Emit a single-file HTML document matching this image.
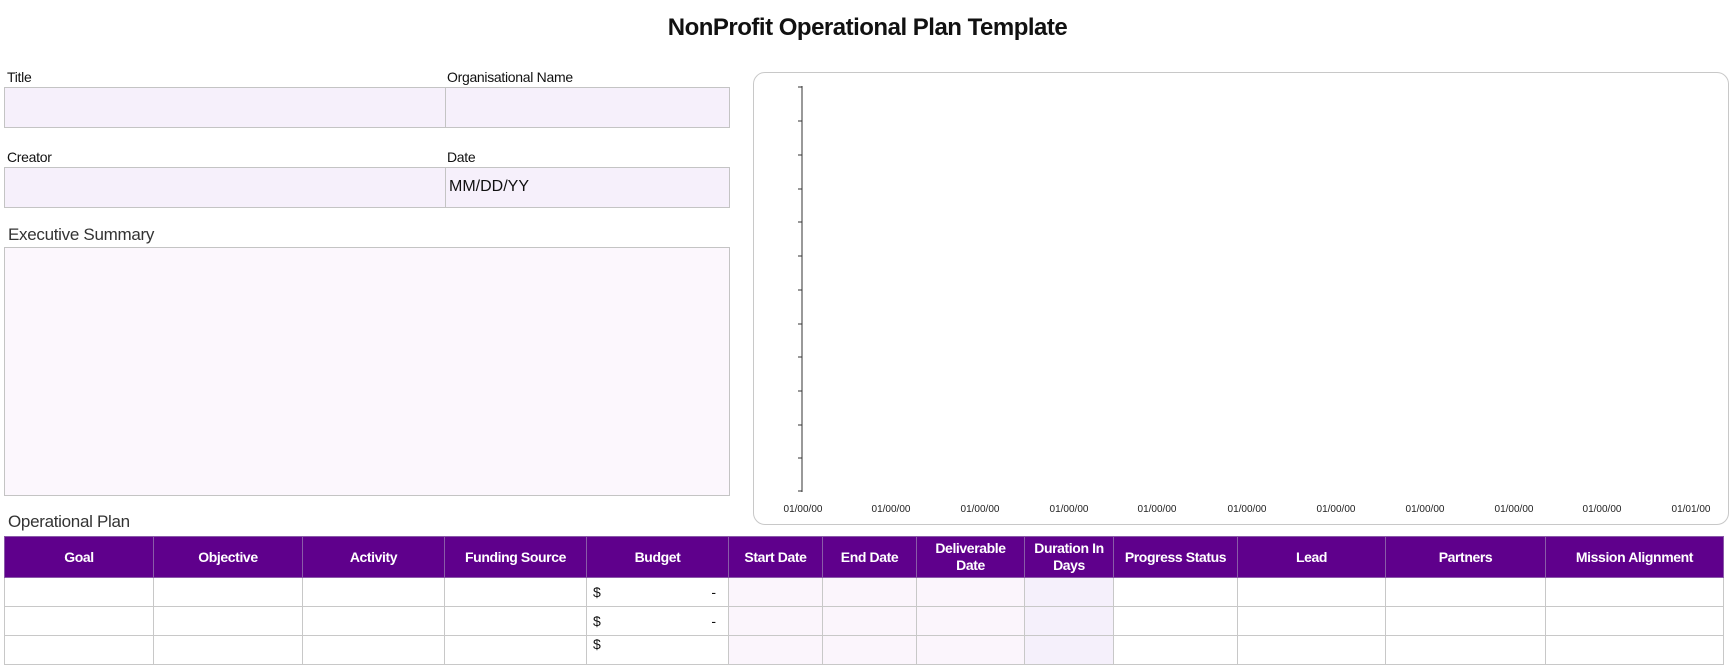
<!DOCTYPE html>
<html><head><meta charset="utf-8"><style>
*{margin:0;padding:0;box-sizing:border-box}
body{width:1735px;height:649px;background:#fff;font-family:"Liberation Sans",sans-serif;position:relative;overflow:hidden;color:#111}
.a{position:absolute}
.lbl{font-size:14px;letter-spacing:-0.3px}
.box{background:#f6f0fb;border:1px solid #c4c4c4}
table{position:absolute;left:4px;top:536px;border-collapse:collapse;table-layout:fixed}
th{background:#5f008c;color:#fff;font-size:14px;font-weight:bold;letter-spacing:-0.4px;height:41px;border:1px solid #8a5aa8;line-height:17px}
td{height:29px;border:1px solid #c8c8c8;font-size:14px}
.p{background:#fbf5fc}.d{background:#f5f0fb}
.xl{position:absolute;top:504px;font-size:10px;color:#222;transform:translateX(-50%)}
</style></head><body>
<div class="a" style="left:0;width:1735px;top:14px;text-align:center;font-size:24px;font-weight:bold;letter-spacing:-0.5px">NonProfit Operational Plan Template</div>
<div class="a lbl" style="left:7px;top:69px">Title</div>
<div class="a lbl" style="left:447px;top:69px">Organisational Name</div>
<div class="a box" style="left:4px;top:87px;width:442px;height:41px"></div>
<div class="a box" style="left:445px;top:87px;width:285px;height:41px"></div>
<div class="a lbl" style="left:7px;top:149px">Creator</div>
<div class="a lbl" style="left:447px;top:149px">Date</div>
<div class="a box" style="left:4px;top:167px;width:442px;height:41px"></div>
<div class="a box" style="left:445px;top:167px;width:285px;height:41px;font-size:16px;padding:10px 0 0 3px">MM/DD/YY</div>
<div class="a" style="left:8px;top:225px;font-size:17px;color:#333;letter-spacing:-0.3px">Executive Summary</div>
<div class="a box" style="left:4px;top:247px;width:726px;height:249px;background:#fcf7fd"></div>
<div class="a" style="left:753px;top:72px;width:976px;height:453px;border:1px solid #c8c8c8;border-radius:12px"></div>
<svg class="a" style="left:0;top:0" width="1735" height="649">
<line x1="802" y1="86" x2="802" y2="492" stroke="#333" stroke-width="1"/>
<g stroke="#333"><line x1="798" y1="87" x2="802" y2="87"/><line x1="798" y1="121" x2="802" y2="121"/><line x1="798" y1="155" x2="802" y2="155"/><line x1="798" y1="189" x2="802" y2="189"/><line x1="798" y1="222" x2="802" y2="222"/><line x1="798" y1="256" x2="802" y2="256"/><line x1="798" y1="290" x2="802" y2="290"/><line x1="798" y1="324" x2="802" y2="324"/><line x1="798" y1="357" x2="802" y2="357"/><line x1="798" y1="391" x2="802" y2="391"/><line x1="798" y1="425" x2="802" y2="425"/><line x1="798" y1="458" x2="802" y2="458"/><line x1="798" y1="491" x2="802" y2="491"/></g>
</svg>
<div class="xl" style="left:803px">01/00/00</div><div class="xl" style="left:891px">01/00/00</div><div class="xl" style="left:980px">01/00/00</div><div class="xl" style="left:1069px">01/00/00</div><div class="xl" style="left:1157px">01/00/00</div><div class="xl" style="left:1247px">01/00/00</div><div class="xl" style="left:1336px">01/00/00</div><div class="xl" style="left:1425px">01/00/00</div><div class="xl" style="left:1514px">01/00/00</div><div class="xl" style="left:1602px">01/00/00</div><div class="xl" style="left:1691px">01/01/00</div>
<div class="a" style="left:8px;top:512px;font-size:17px;color:#333;letter-spacing:-0.3px">Operational Plan</div>
<table>
<colgroup><col style="width:149px"><col style="width:149px"><col style="width:142px"><col style="width:142px"><col style="width:142px"><col style="width:94px"><col style="width:94px"><col style="width:108px"><col style="width:89px"><col style="width:124px"><col style="width:148px"><col style="width:160px"><col style="width:178px"></colgroup>
<tr><th>Goal</th><th>Objective</th><th>Activity</th><th>Funding Source</th><th>Budget</th><th>Start Date</th><th>End Date</th><th>Deliverable<br>Date</th><th>Duration In<br>Days</th><th>Progress Status</th><th>Lead</th><th>Partners</th><th>Mission Alignment</th></tr>
<tr><td></td><td></td><td></td><td></td><td style="padding:0 12px 0 6px">$<span style="float:right">-</span></td><td class="p"></td><td class="p"></td><td class="p"></td><td class="d"></td><td></td><td></td><td></td><td></td></tr>
<tr><td></td><td></td><td></td><td></td><td style="padding:0 12px 0 6px">$<span style="float:right">-</span></td><td class="p"></td><td class="p"></td><td class="p"></td><td class="d"></td><td></td><td></td><td></td><td></td></tr>
<tr><td></td><td></td><td></td><td></td><td style="padding:0 12px 0 6px;vertical-align:top">$</td><td class="p"></td><td class="p"></td><td class="p"></td><td class="d"></td><td></td><td></td><td></td><td></td></tr>
</table>
</body></html>
